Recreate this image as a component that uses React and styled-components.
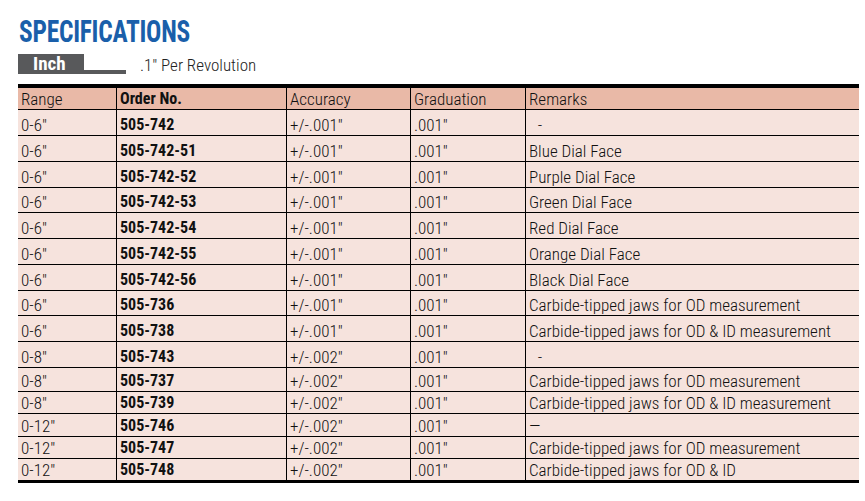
import React from 'react'
import styled, { createGlobalStyle } from 'styled-components'

const GlobalStyle = createGlobalStyle`
  html, body { margin: 0; padding: 0; background: #fff; }
  body { font-family: "Roboto Condensed", "Liberation Sans Narrow", Roboto, sans-serif; }
`

const rows = [
  ['0-6″', '505-742', '+/-.001″', '.001″', ' -', 26],
  ['0-6″', '505-742-51', '+/-.001″', '.001″', 'Blue Dial Face', 26],
  ['0-6″', '505-742-52', '+/-.001″', '.001″', 'Purple Dial Face', 26],
  ['0-6″', '505-742-53', '+/-.001″', '.001″', 'Green Dial Face', 25],
  ['0-6″', '505-742-54', '+/-.001″', '.001″', 'Red Dial Face', 26],
  ['0-6″', '505-742-55', '+/-.001″', '.001″', 'Orange Dial Face', 26],
  ['0-6″', '505-742-56', '+/-.001″', '.001″', 'Black Dial Face', 26],
  ['0-6″', '505-736', '+/-.001″', '.001″', 'Carbide-tipped jaws for OD measurement', 25],
  ['0-6″', '505-738', '+/-.001″', '.001″', 'Carbide-tipped jaws for OD & ID measurement', 26],
  ['0-8″', '505-743', '+/-.002″', '.001″', ' -', 26],
  ['0-8″', '505-737', '+/-.002″', '.001″', 'Carbide-tipped jaws for OD measurement', 24],
  ['0-8″', '505-739', '+/-.002″', '.001″', 'Carbide-tipped jaws for OD & ID measurement', 22],
  ['0-12″', '505-746', '+/-.002″', '.001″', '—', 23],
  ['0-12″', '505-747', '+/-.002″', '.001″', 'Carbide-tipped jaws for OD measurement', 22],
  ['0-12″', '505-748', '+/-.002″', '.001″', 'Carbide-tipped jaws for OD & ID', 23],
]

function App() {
  return (
    <Page>
      <GlobalStyle />
      <Title>SPECIFICATIONS</Title>
      <SubBar>
        <Badge>Inch</Badge>
        <BadgeTail />
        <Note>.1″ Per Revolution</Note>
      </SubBar>
      <Table>
        <thead>
          <HeadRow>
            <Th>Range</Th>
            <Th bold>Order No.</Th>
            <Th>Accuracy</Th>
            <Th>Graduation</Th>
            <Th>Remarks</Th>
          </HeadRow>
        </thead>
        <tbody>
          {rows.map((r, i) => (
            <Row key={i} h={r[5]}>
              <Td>{r[0]}</Td>
              <Td bold>{r[1]}</Td>
              <Td>{r[2]}</Td>
              <Td>{r[3]}</Td>
              <Td dash={r[4] === ' -'}>{r[4]}</Td>
            </Row>
          ))}
        </tbody>
      </Table>
    </Page>
  )
}

export default App

const Page = styled.div`
  width: 865px;
  height: 501px;
  padding: 16px 0 0 18px;
  box-sizing: border-box;
`

const Title = styled.h1`
  margin: 0 0 0 1px;
  font-weight: 700;
  font-size: 31px;
  line-height: 31px;
  color: #1a5faa;
  letter-spacing: -0.3px;
  transform: scaleX(0.82);
  transform-origin: left center;
`

const SubBar = styled.div`
  display: flex;
  align-items: flex-end;
  margin-top: 7px;
  height: 20px;
`

const Badge = styled.div`
  width: 66px;
  height: 20px;
  background: #58595b;
  color: #fff;
  font-weight: 700;
  font-size: 19px;
  line-height: 20px;
  padding-left: 15px;
  box-sizing: border-box;
`

const BadgeTail = styled.div`
  width: 42px;
  height: 4px;
  background: #58595b;
`

const Note = styled.div`
  margin-left: 14px;
  font-size: 17px;
  font-weight: 300;
  line-height: 18px;
  color: #222;
`

const Table = styled.table`
  margin-top: 10px;
  width: 841px;
  border-collapse: collapse;
  border-top: 4px solid #000;
  border-bottom: 3px solid #000;
  table-layout: fixed;
  font-size: 17px;
  color: #111;
`

const HeadRow = styled.tr`
  height: 23px;
  background: #e9b9a7;
`

const Row = styled.tr`
  height: ${p => p.h}px;
  background: #f6e3dd;
`

const Th = styled.th`
  text-align: left;
  font-weight: ${p => (p.bold ? 700 : 300)};
  font-size: ${p => (p.bold ? 16 : 17)}px;
  padding: 0 0 0 3px;
  border-left: 1px solid #000;
  border-bottom: 1.5px solid #000;
  vertical-align: bottom;
  line-height: 20px;
  &:first-child { border-left: none; width: 95px; }
  &:nth-child(2) { width: 166px; }
  &:nth-child(3) { width: 120px; }
  &:nth-child(4) { width: 111px; }
`

const Td = styled.td`
  font-weight: ${p => (p.bold ? 700 : 300)};
  font-size: ${p => (p.bold ? 16 : 17)}px;
  padding: 0 0 0 ${p => (p.dash ? 8 : 3)}px;
  border-left: 1px solid #000;
  border-top: 1.5px solid #000;
  vertical-align: bottom;
  line-height: 20px;
  white-space: pre;
  &:first-child { border-left: none; }
`
